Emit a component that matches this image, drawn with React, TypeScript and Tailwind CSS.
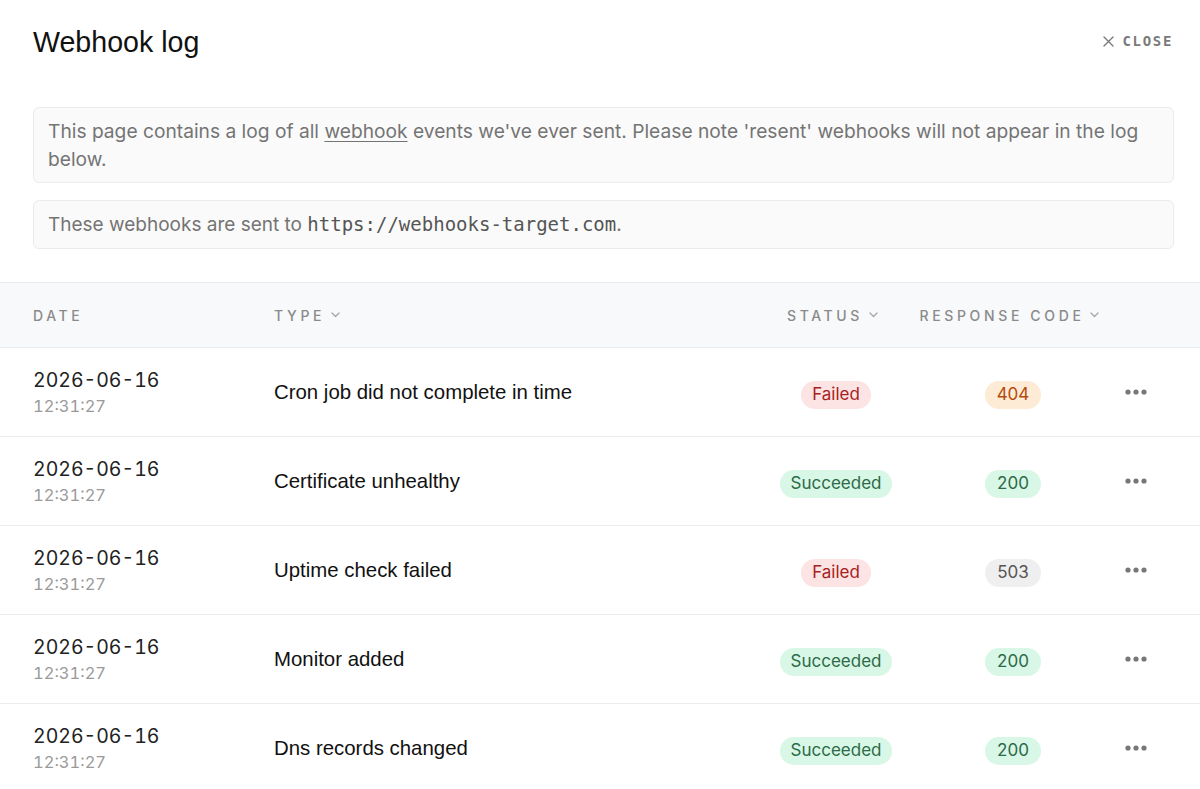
import React from 'react'

type Row = {
  date: string
  time: string
  type: string
  status: 'Failed' | 'Succeeded'
  code: number
}

const rows: Row[] = [
  { date: '2026-06-16', time: '12:31:27', type: 'Cron job did not complete in time', status: 'Failed', code: 404 },
  { date: '2026-06-16', time: '12:31:27', type: 'Certificate unhealthy', status: 'Succeeded', code: 200 },
  { date: '2026-06-16', time: '12:31:27', type: 'Uptime check failed', status: 'Failed', code: 503 },
  { date: '2026-06-16', time: '12:31:27', type: 'Monitor added', status: 'Succeeded', code: 200 },
  { date: '2026-06-16', time: '12:31:27', type: 'Dns records changed', status: 'Succeeded', code: 200 },
]

const inter = "font-['Inter','Noto_Sans',sans-serif]"
const arial = "font-['Liberation_Sans',Arial,sans-serif]"
const mono = "font-['DejaVu_Sans_Mono','Liberation_Mono',monospace]"

const Chevron = () => (
  <svg width="9" height="6" viewBox="0 0 9 6" className="ml-[6px] text-[#a3a3a3]" fill="none">
    <path d="M1 1l3.5 3.5L8 1" stroke="currentColor" strokeWidth="1.2" strokeLinecap="round" strokeLinejoin="round" />
  </svg>
)

const Dots = () => (
  <svg width="22" height="6" viewBox="0 0 22 6" className="text-[#777]">
    <circle cx="3" cy="3" r="2.6" fill="currentColor" />
    <circle cx="11" cy="3" r="2.6" fill="currentColor" />
    <circle cx="19" cy="3" r="2.6" fill="currentColor" />
  </svg>
)

const statusClasses = (s: Row['status']) =>
  s === 'Failed' ? 'bg-[#fce4e4] text-[#a82121]' : 'bg-[#d9f7e6] text-[#2c6a48]'

const codeClasses = (c: number) => {
  if (c >= 200 && c < 300) return 'bg-[#d9f7e6] text-[#2c6a48]'
  if (c >= 500) return 'bg-[#efefef] text-[#555]'
  return 'bg-[#fdebd5] text-[#b34a0c]'
}

export default function App() {
  return (
    <div className={`w-[1200px] h-[789px] overflow-hidden bg-white ${inter}`}>
      {/* Header */}
      <div className="flex items-center justify-between pl-[33px] pr-[27px] pt-[23px] h-[60px]">
        <h1 className={`${arial} text-[28.6px] leading-[34px] text-[#111]`}>Webhook log</h1>
        <button className={`${mono} flex items-center gap-[8px] text-[14px] font-bold tracking-[0.12em] text-[#7a7a7a]`}>
          <svg width="11" height="11" viewBox="0 0 11 11" fill="none">
            <path d="M1 1l9 9M10 1l-9 9" stroke="currentColor" strokeWidth="1.4" strokeLinecap="round" />
          </svg>
          CLOSE
        </button>
      </div>

      {/* Notes */}
      <div className="px-[33px] pr-[26px] mt-[47px] flex flex-col gap-[17px]">
        <div className="rounded-[6px] border border-[#ebebeb] bg-[#fafafa] px-[14px] py-[9px] text-[19.2px] leading-[28px] text-[#747474]">
          This page contains a log of all <span className="underline underline-offset-[3px]">webhook</span> events
          we've ever sent. Please note 'resent' webhooks will not appear in the log below.
        </div>
        <div className="rounded-[6px] border border-[#ebebeb] bg-[#fafafa] px-[14px] py-[9px] text-[19px] leading-[28px] text-[#747474]">
          These webhooks are sent to <span className={`${mono} text-[19px] text-[#555]`}>https://webhooks-target.com</span>.
        </div>
      </div>

      {/* Table */}
      <div className="mt-[33px]">
        <div className="grid grid-cols-[241px_496px_132px_222px_23px] pl-[33px] h-[66px] items-center border-y border-[#e9eaec] bg-[#f8f9fb] text-[14px] font-medium tracking-[0.26em] text-[#8a8a8a]">
          <div>DATE</div>
          <div className="flex items-center">TYPE<Chevron /></div>
          <div className="flex items-center justify-center pr-[7px]">STATUS<Chevron /></div>
          <div className="flex items-center justify-center pr-[7px]">RESPONSE CODE<Chevron /></div>
          <div />
        </div>
        {rows.map((r, i) => (
          <div
            key={i}
            className="grid grid-cols-[241px_496px_132px_222px_23px] pl-[33px] h-[89px] items-center border-b border-[#ececec]"
          >
            <div className="flex flex-col tabular-nums">
              <span className="text-[19.5px] leading-[28px] text-[#222]">{r.date}</span>
              <span className="text-[16.5px] leading-[24px] text-[#9a9a9a]">{r.time}</span>
            </div>
            <div className={`${arial} text-[20.4px] text-[#111]`}>{r.type}</div>
            <div className="flex justify-center pt-[6px]">
              <span className={`rounded-full px-[11px] h-[28px] flex items-center text-[17px] ${statusClasses(r.status)}`}>
                {r.status}
              </span>
            </div>
            <div className="flex justify-center pt-[6px]">
              <span className={`rounded-full px-[12px] h-[28px] flex items-center text-[17px] ${codeClasses(r.code)}`}>
                {r.code}
              </span>
            </div>
            <div className="flex justify-center">
              <Dots />
            </div>
          </div>
        ))}
      </div>
    </div>
  )
}
